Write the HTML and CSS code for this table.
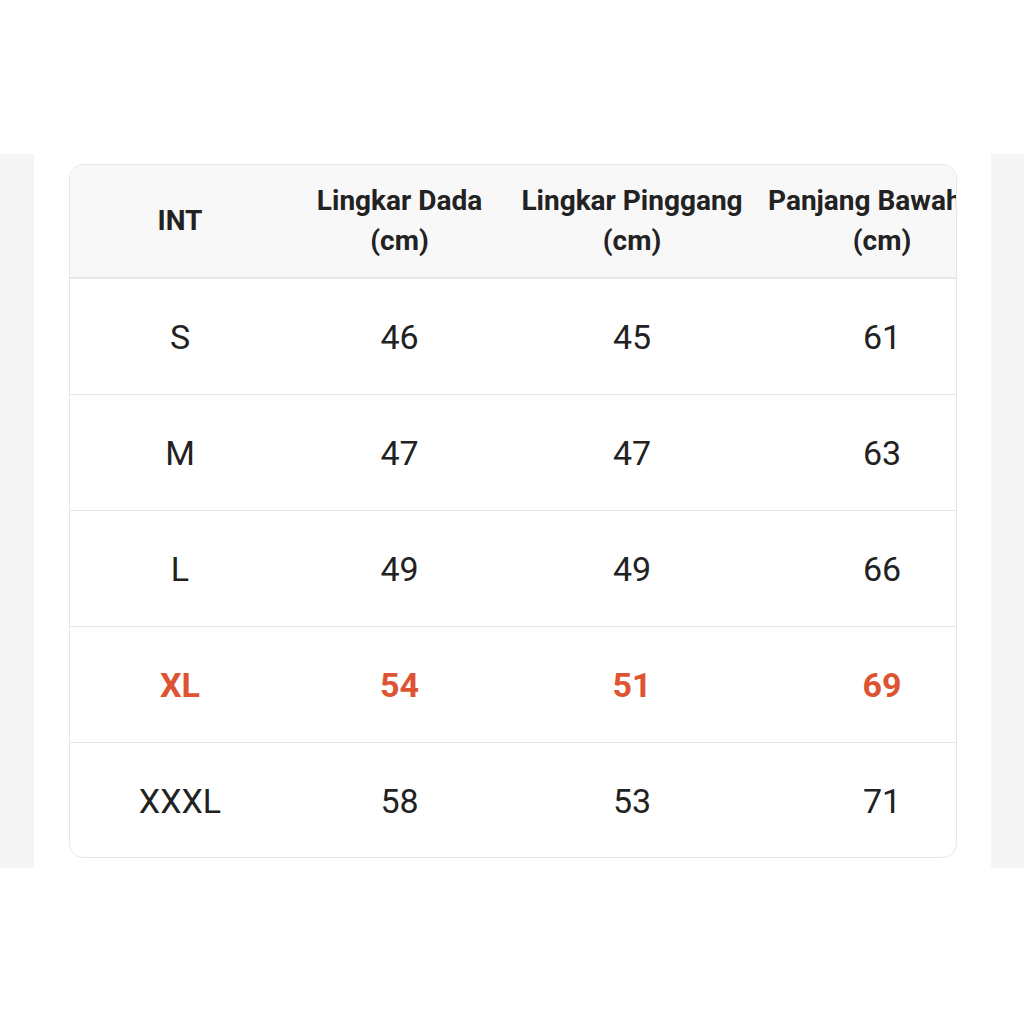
FILE: index.html
```html
<!DOCTYPE html>
<html>
<head>
<meta charset="utf-8">
<link rel="stylesheet" href="styles.css">
</head>
<body>
<div class="band">
  <div class="side side-left"></div>
  <div class="main">
    <div class="card">
      <table class="size-table">
        <colgroup>
          <col class="c1"><col class="c2"><col class="c3"><col class="c4">
        </colgroup>
        <thead>
          <tr>
            <th>INT</th>
            <th>Lingkar Dada<br>(cm)</th>
            <th>Lingkar Pinggang<br>(cm)</th>
            <th><span class="start-line">Panjang Bawah</span><span class="center-line">(cm)</span></th>
          </tr>
        </thead>
        <tbody>
          <tr><td>S</td><td>46</td><td>45</td><td>61</td></tr>
          <tr><td>M</td><td>47</td><td>47</td><td>63</td></tr>
          <tr><td>L</td><td>49</td><td>49</td><td>66</td></tr>
          <tr class="active"><td>XL</td><td>54</td><td>51</td><td>69</td></tr>
          <tr class="last"><td>XXXL</td><td>58</td><td>53</td><td>71</td></tr>
        </tbody>
      </table>
    </div>
  </div>
  <div class="side side-right"></div>
</div>
</body>
</html>
```
FILE: styles.css
```css
html, body {
  margin: 0;
  padding: 0;
  background: #ffffff;
}
body {
  font-family: Roboto, "Noto Sans", Arial, sans-serif;
  color: #222222;
  padding-top: 154px;
}
.band {
  display: flex;
  height: 714px;
}
.side {
  background: #f5f5f5;
}
.side-left { width: 34px; }
.side-right { width: 33px; }
.main {
  flex: 1;
  background: #ffffff;
  padding: 10px 0 0 35px;
}
.card {
  width: 886px;
  height: 692px;
  border: 1px solid #e6e6e6;
  border-radius: 14px;
  overflow: hidden;
  background: #ffffff;
}
.size-table {
  border-collapse: collapse;
  table-layout: fixed;
  width: 939px;
}
.c1 { width: 220px; }
.c2 { width: 219px; }
.c3 { width: 246px; }
.c4 { width: 254px; }
.size-table th {
  background: #f8f8f8;
  height: 112px;
  padding: 0;
  font-size: 28px;
  font-weight: 700;
  line-height: 40px;
  text-align: center;
  white-space: nowrap;
  border-bottom: 2px solid #e8e8e8;
  color: #222222;
}
.start-line {
  display: block;
  text-align: left;
  padding-left: 13px;
}
.center-line {
  display: block;
  text-align: center;
}
.size-table td {
  height: 115px;
  padding: 0;
  font-size: 34px;
  font-weight: 400;
  text-align: center;
  border-bottom: 1px solid #e6e6e6;
  color: #222222;
}
.size-table tr.last td {
  border-bottom: none;
}
.size-table tr.active td {
  color: #de5432;
  font-weight: 700;
}
```
